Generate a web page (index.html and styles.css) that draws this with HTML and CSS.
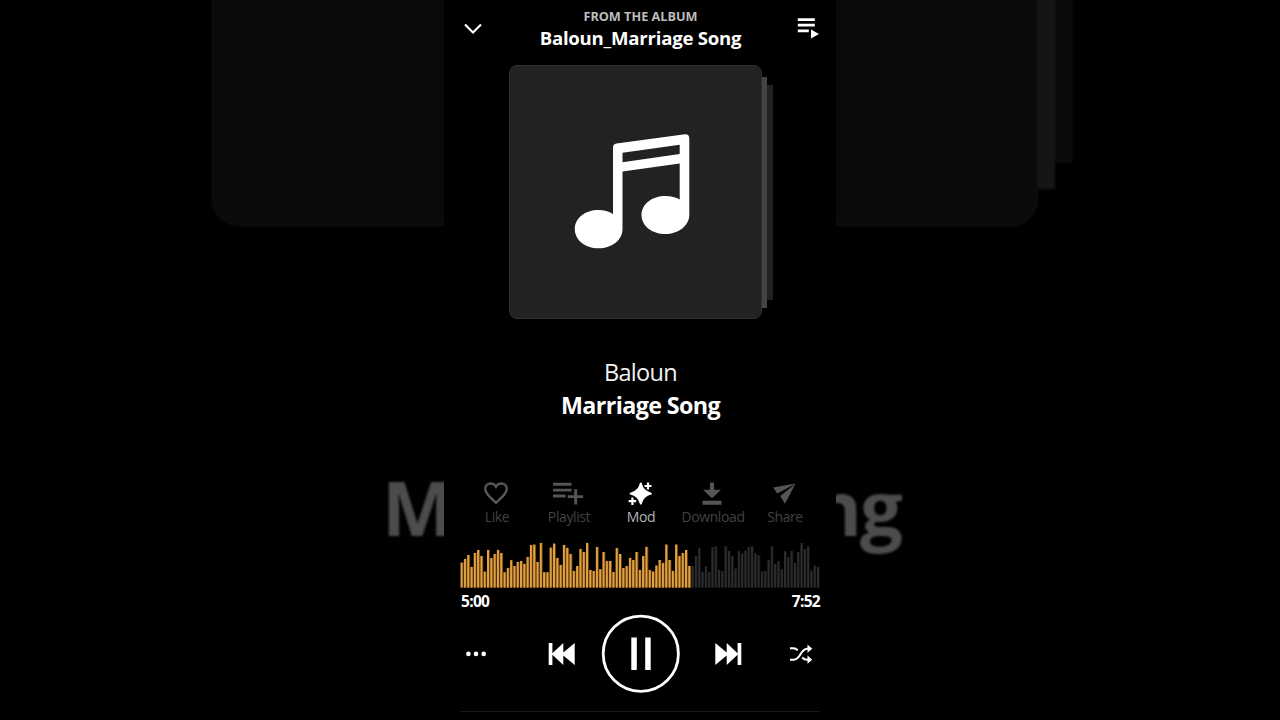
FILE: index.html
```html
<!DOCTYPE html>
<html lang="en">
<head>
<meta charset="utf-8">
<title>Baloun - Marriage Song</title>
<link rel="stylesheet" href="styles.css">
</head>
<body>
<div class="stage">
  <div class="backdrop" aria-hidden="true">
    <div class="backdrop-sheet backdrop-sheet-far"></div>
    <div class="backdrop-sheet backdrop-sheet-near"></div>
    <div class="backdrop-cover"></div>
    <div class="backdrop-title"><span>M</span><span>ng</span></div>
  </div>
  <main class="player">
    <header class="header">
      <svg class="icon-down" width="20" height="14" viewBox="0 0 20 14"><path d="M2 2.500l8 8 8-8" fill="none" stroke="#fff" stroke-width="2.1"/></svg>
      <div class="album">
        <div class="album-label">FROM THE ALBUM</div>
        <div class="album-name">Baloun_Marriage Song</div>
      </div>
      <svg class="icon-queue" width="24" height="24" viewBox="0 0 24 24"><path d="M1.800 2.200h17v2.800h-17zM1.800 7.700h17v2.800h-17zM1.800 13.500h11v2.800h-11zM15 13.400v9.200l8-4.600z" fill="#fff"/></svg>
    </header>
    <section class="art">
      <div class="sheet sheet-far"></div>
      <div class="sheet sheet-near"></div>
      <div class="cover">
        <svg width="253" height="254" viewBox="509 65 253 254"><path fill="#fff" fill-rule="evenodd" d="M613 147.500Q613 144 616.500 143.600L685 134.200Q689.300 133.900 689.300 138.500V215C689.300 226 678 234 665.500 234C652 234 641.500 226 641.500 215C641.500 204 652 196 665.500 196C671 196 676 197.300 679.700 199.500V163.600L622.500 171.600V229C622.500 240 612 248.300 598.500 248.300C585 248.300 574.800 240 574.800 229C574.800 218 585 210 598.500 210C604 210 609 211.500 613 214ZM622.500 152.700V162.200L679.700 154V144.800Z"/></svg>
      </div>
    </section>
    <section class="track">
      <div class="artist">Baloun</div>
      <div class="title">Marriage Song</div>
    </section>
    <nav class="actions">
      <div class="action"><svg width="32" height="26" viewBox="0 0 32 26"><path d="M16 22.700C9.500 16.800 5.200 13.200 5.200 8.900C5.200 5.600 7.700 3.500 10.700 3.500C12.900 3.500 14.800 4.600 16 6.500C17.200 4.600 19.100 3.500 21.300 3.500C24.300 3.500 26.800 5.600 26.800 8.900C26.800 13.200 22.500 16.800 16 22.700Z" fill="none" stroke="#585858" stroke-width="2.400"/></svg><span>Like</span></div>
      <div class="action"><svg width="32" height="26" viewBox="0 0 32 26"><path d="M1 2.800h18.500v2.900H1zM1 8.700h18.500v2.900H1zM1 14.600h12.500v2.900H1zM22.200 9.200h2.900v6h6v2.900h-6v6.300h-2.900v-6.300h-6.500v-2.900h6.500z" fill="#555"/></svg><span>Playlist</span></div>
      <div class="action action-on"><svg width="32" height="26" viewBox="0 0 32 26"><path d="M16.800 3.300Q18.800 11.700 27 13.700Q18.800 15.700 16.800 23.700Q14.800 15.700 6.500 13.700Q14.800 11.700 16.800 3.300Z" fill="#fff" stroke="#fff" stroke-width="1.800" stroke-linejoin="round"/><path d="M24 2.500v7M20.500 6h7M8.400 17.500v7.500M4.600 21.200h7.600" stroke="#fff" stroke-width="2.200"/></svg><span>Mod</span></div>
      <div class="action"><svg width="32" height="26" viewBox="0 0 32 26"><path d="M14 2.500h4v7.300h7L16 18.200 7 9.800h7zM6.500 20.800h19v3.900h-19z" fill="#555"/></svg><span>Download</span></div>
      <div class="action"><svg width="32" height="26" viewBox="0 0 32 26"><path d="M27.500 3.500L5.200 7.600l4 5.800L22 6.800zM27.500 3.500L17 23.800l-4.800-7.800L23.800 6.700z" fill="#555"/></svg><span>Share</span></div>
    </nav>
    <svg id="wave" class="wave" width="360" height="46" viewBox="0 0 360 46"></svg>
    <div class="times"><span>5:00</span><span>7:52</span></div>
    <div class="controls">
      <svg class="more" width="22" height="8" viewBox="0 0 22 8"><g fill="#fff"><circle cx="3.400" cy="3.900" r="2.300"/><circle cx="11" cy="3.900" r="2.300"/><circle cx="18.700" cy="3.900" r="2.300"/></g></svg>
      <svg class="prev" width="28" height="24" viewBox="0 0 28 24"><path d="M.7 1h3.700v10.300L15.300 1v9.600L26.700 1v22L15.300 13.400V23L4.400 12.700V23H.7z" fill="#fff"/></svg>
      <svg class="pause" width="80" height="80" viewBox="0 0 80 80"><circle cx="39.800" cy="39.700" r="37.600" fill="none" stroke="#fff" stroke-width="2.800"/><path d="M30.300 23.500h5.500v32.600h-5.500zM44.200 23.500h5.500v32.600h-5.500z" fill="#fff"/></svg>
      <svg class="next" width="28" height="24" viewBox="0 0 28 24"><path d="M27.300 1h-3.700v10.300L12.700 1v9.600L1.300 1v22L12.700 13.400V23L23.600 12.700V23h3.700z" fill="#fff"/></svg>
      <svg class="shuffle" width="24" height="22" viewBox="0 0 24 22"><path d="M1 5.200h3.300Q7 5.200 8.700 7.300M1 16.700h3.500C12 16.700 11 5.700 18.500 5.700H20M13.200 14.500Q15.200 16.700 18.500 16.700H20" fill="none" stroke="#fff" stroke-width="2"/><path d="M18.500 1.600l4.700 4.100-4.700 4.100zM18.500 12.600l4.700 4.100-4.700 4.100z" fill="#fff"/></svg>
    </div>
    <div class="rule"></div>
  </main>
</div>
<script src="wave.js"></script>
</body>
</html>
```
FILE: styles.css
```css
* { box-sizing: border-box; }
body { margin: 0; background: #000; color: #fff; font-family: "Open Sans", "Noto Sans", sans-serif; }
.stage { position: relative; width: 1280px; height: 720px; overflow: hidden; background: #000; }
.backdrop { position: absolute; inset: 0; filter: blur(.8px); }
.backdrop-cover { position: absolute; left: 212px; top: -40px; width: 826px; height: 266px; background: #0a0a0a; border: 2px solid #0f0f0f; border-radius: 0 0 27px 27px; }
.backdrop-sheet { position: absolute; top: -20px; }
.backdrop-sheet-near { left: 1030px; width: 25px; height: 209px; background: #151515; }
.backdrop-sheet-far { left: 1050px; width: 23px; height: 183px; background: #0a0a0a; }
.backdrop-title { position: absolute; left: 382px; top: 455px; width: 519px; display: flex; justify-content: space-between; font-size: 76px; line-height: 104px; font-weight: 700; color: #4c4c4c; letter-spacing: -2px; }
.player { position: relative; display: flex; flex-direction: column; width: 392px; height: 720px; margin: 0 auto; padding: 0 16px; background: #000; }
.header { display: flex; justify-content: space-between; height: 65px; }
.icon-down { margin: 22px 0 0 3px; }
.icon-queue { margin-top: 16px; }
.album { padding-left: 2px; text-align: center; white-space: nowrap; }
.album-label { margin-top: 8px; font-size: 12.7px; line-height: 17px; font-weight: 700; color: #bdbdbd; }
.album-name { font-size: 18.600px; line-height: 25px; font-weight: 700; letter-spacing: -.23px; }
.art { position: relative; height: 254px; margin-left: 49px; }
.cover { position: relative; width: 253px; height: 254px; background: #222; border: 1px solid #2e2e2e; border-radius: 8px; }
.cover svg { display: block; margin: -1px; }
.sheet { position: absolute; }
.sheet-near { left: 250px; top: 12px; width: 8px; height: 231px; background: #444; }
.sheet-far { left: 256px; top: 20px; width: 8px; height: 215px; background: #222; }
.track { height: 160px; padding: 36px 0 0 1px; text-align: center; }
.artist { font-size: 23.500px; line-height: 34px; letter-spacing: -.7px; color: #f2f2f2; }
.title { font-size: 23.300px; line-height: 33px; font-weight: 700; letter-spacing: -.62px; }
.actions { display: grid; grid-template-columns: repeat(5, 72px); height: 63px; margin-left: 1px; }
.action { display: flex; flex-direction: column; align-items: center; padding-top: 1px; font-size: 14px; line-height: 22px; font-weight: 500; letter-spacing: -.4px; color: #424242; white-space: nowrap; }
.action svg { margin-right: 2px; }
.action-on { color: #b4b4b4; }
.wave { flex: none; height: 46px; }
.times { display: flex; justify-content: space-between; height: 26px; padding: 3px 0 0 1px; font-size: 15.500px; line-height: 21px; font-weight: 700; letter-spacing: -.7px; }
.controls { display: flex; align-items: center; height: 80px; margin-top: -.5px; }
.more { margin-left: 5px; }
.prev { margin-left: 61px; }
.pause { margin-left: 25px; }
.next { margin-left: 33px; }
.shuffle { margin-left: 47px; }
.controls svg { flex: none; }
.rule { height: 1px; margin: 17.500px 0 0; background: #191919; }
```
FILE: wave.js
```js
// Distance from the top of the waveform to each bar, in thirds of a pixel.
const tops = [74,63,51,87,45,36,54,101,36,60,48,36,45,103,90,67,84,72,69,78,57,21,20,72,15,103,103,29,17,60,81,21,30,48,99,84,33,
  42,15,96,99,27,94,42,69,69,102,30,48,90,84,60,66,42,96,54,27,96,101,83,66,75,20,66,99,20,54,45,36,84,
  84,54,30,102,85,102,27,25,96,99,25,39,55,92,40,47,38,27,25,45,52,101,99,66,25,78,69,94,40,57,39,75,42,15,33,25,98,83,87];
const played = 70;
const wave = document.getElementById("wave");
function bar(x, w, h, fill) {
  const r = document.createElementNS("http://www.w3.org/2000/svg", "rect");
  r.setAttribute("x", x);
  r.setAttribute("y", 45.6 - h);
  r.setAttribute("width", w);
  r.setAttribute("height", h);
  r.setAttribute("fill", fill);
  wave.appendChild(r);
}
tops.forEach((top, i) => {
  const x = 0.6 + i * 3.3;
  const h = (149 - top) / 3;
  const on = i < played;
  bar(x, 2.9, h, on ? "#6e430a" : "#0e0e0e");
  bar(x, 2, h, on ? "#e0a044" : "#2c2c2c");
});
```
